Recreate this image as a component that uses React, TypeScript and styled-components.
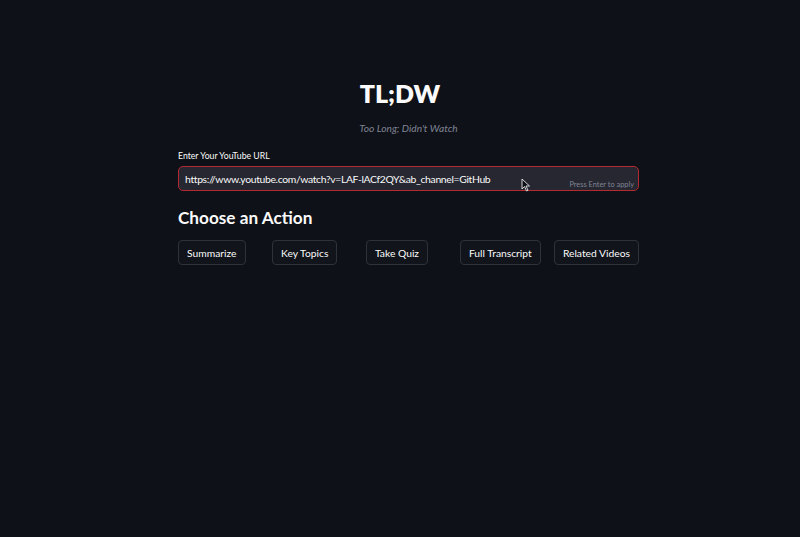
import React from "react";
import styled, { createGlobalStyle } from "styled-components";

const Global = createGlobalStyle`
  html, body { margin: 0; padding: 0; background: #0e1117; }
  body { font-family: "Lato", "Noto Sans", sans-serif; color: #fafafa; }
  * { box-sizing: border-box; }
`;

const Page = styled.div`
  position: relative;
  width: 800px;
  height: 537px;
  background: #0e1117;
  display: flex;
  flex-direction: column;
  padding: 74px 161px 0 178px;
`;

const Title = styled.h1`
  margin: 0;
  padding-right: 17px;
  text-align: center;
  font-size: 25px;
  font-weight: 800;
  line-height: 38px;
  color: #fafafa;
`;

const Subtitle = styled.p`
  margin: 8px 0 0;
  text-align: center;
  font-size: 10.2px;
  line-height: 16px;
  font-style: italic;
  color: #808495;
`;

const Label = styled.label`
  display: block;
  margin-top: 13px;
  font-size: 8.7px;
  line-height: 14px;
  color: #fafafa;
`;

const InputBox = styled.div`
  position: relative;
  margin-top: 3px;
  height: 25px;
  border: 1px solid #b52a30;
  border-radius: 5px;
  background: #262730;
  display: flex;
  align-items: center;
  padding: 0 6px;
`;

const InputText = styled.span`
  font-size: 10.4px;
  letter-spacing: -0.35px;
  color: #fafafa;
  white-space: nowrap;
`;

const Hint = styled.span`
  position: absolute;
  right: 4px;
  bottom: 1px;
  font-size: 7.4px;
  color: #808495;
`;

const Heading = styled.h3`
  margin: 14px 0 0;
  font-size: 17.2px;
  line-height: 26px;
  font-weight: 700;
  color: #fafafa;
`;

const ButtonRow = styled.div`
  margin-top: 9px;
  display: grid;
  grid-template-columns: repeat(5, 1fr);
  column-gap: 11px;
`;

const ActionButton = styled.button`
  justify-self: start;
  height: 25px;
  padding: 0 8px;
  white-space: nowrap;
  background: #11141b;
  border: 1px solid #30323b;
  border-radius: 4px;
  color: #fafafa;
  font-family: "Lato", "Noto Sans", sans-serif;
  font-size: 10.3px;
  cursor: pointer;
`;

const Cursor = styled.svg`
  position: absolute;
  left: 521px;
  top: 178px;
`;

const actions = ["Summarize", "Key Topics", "Take Quiz", "Full Transcript", "Related Videos"];

export default function App() {
  return (
    <>
      <Global />
      <Page>
        <Title>TL;DW</Title>
        <Subtitle>Too Long; Didn't Watch</Subtitle>
        <Label>Enter Your YouTube URL</Label>
        <InputBox>
          <InputText>https://www.youtube.com/watch?v=LAF-lACf2QY&amp;ab_channel=GitHub</InputText>
          <Hint>Press Enter to apply</Hint>
        </InputBox>
        <Heading>Choose an Action</Heading>
        <ButtonRow>
          {actions.map((a) => (
            <ActionButton key={a}>{a}</ActionButton>
          ))}
        </ButtonRow>
        <Cursor width="10" height="14" viewBox="0 0 10 14">
          <path d="M1 1 L1 11 L3.5 8.5 L5.5 13 L7 12.3 L5 8 L8.5 8 Z" fill="#0e1117" stroke="#e8e8e8" strokeWidth="0.9" strokeLinejoin="round" />
        </Cursor>
      </Page>
    </>
  );
}
